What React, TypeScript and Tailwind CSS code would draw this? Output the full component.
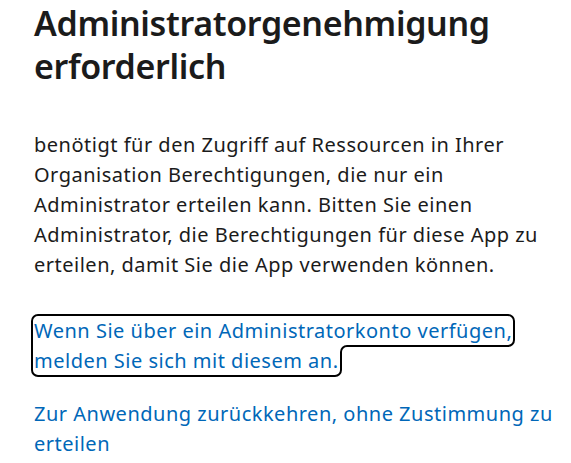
export default function App() {
  return (
    <div className="min-h-screen bg-white pl-[34px] pr-[8px] pt-[2px] font-['Segoe_UI','Noto_Sans',sans-serif] text-[#1b1b1b]">
      <h1 className="text-[34px] leading-[43px] font-semibold tracking-[-0.35px]">
        Administratorgenehmigung erforderlich
      </h1>
      <p className="mt-[42px] text-[20px] leading-[30px] tracking-[0.5px]">
        benötigt für den Zugriff auf Ressourcen in Ihrer Organisation
        Berechtigungen, die nur ein Administrator erteilen kann. Bitten Sie
        einen Administrator, die Berechtigungen für diese App zu erteilen, damit
        Sie die App verwenden können.
      </p>
      <div className="mt-[36px] text-[20px] leading-[30px] tracking-[0.5px]">
        <a
          href="#"
          className="text-[#0067b8] outline-2 outline-solid outline-black outline-offset-[1px] rounded-[4px]"
        >
          Wenn Sie über ein Administratorkonto verfügen, melden Sie sich mit
          diesem an.
        </a>
      </div>
      <div className="mt-[23px] text-[20px] leading-[30px] tracking-[0.5px]">
        <a href="#" className="text-[#0067b8]">
          Zur Anwendung zurückkehren, ohne Zustimmung zu erteilen
        </a>
      </div>
    </div>
  );
}
